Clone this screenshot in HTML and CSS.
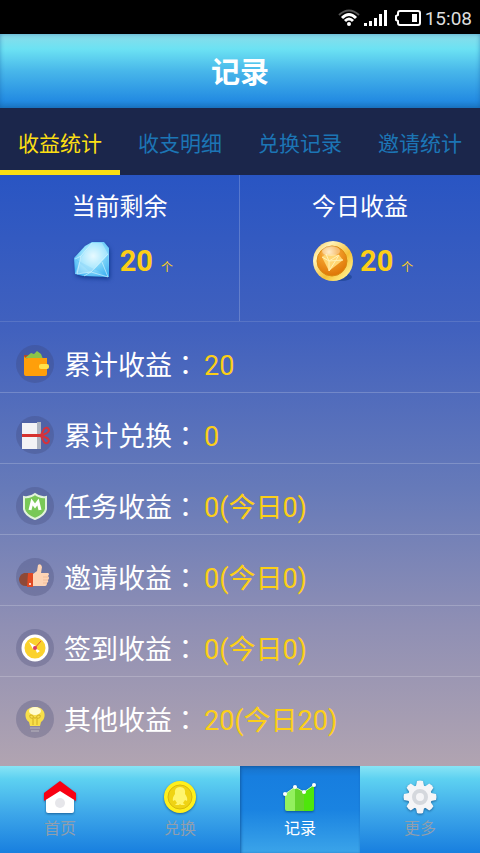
FILE: index.html
```html
<!DOCTYPE html>
<html lang="zh-CN">
	<head>
		<meta charset="utf-8">
		<meta name="viewport" content="width=device-width, initial-scale=1.0">
		<title>记录</title>
		<link rel="stylesheet" href="styles.css">
	</head>
	<body>
		<!-- 状态栏 -->
		<div class="status">
			<svg width="22" height="18" viewBox="0 0 22 18" fill="none" stroke-width="2">
				<path d="M1 6Q11-3 21 6" stroke="#555"/>
				<path d="M4 9Q11 2 18 9M7 12Q11 8 15 12" stroke="#fff" stroke-width="3"/>
				<circle cx="11" cy="15" r="2" fill="#fff"/>
			</svg>
			<svg width="23" height="18" viewBox="0 0 23 18" fill="#fff">
				<path d="M0 14h3v3H0zM5 12h3v5H5zM10 9h3v8h-3zM15 5h3v12h-3zM20 1h3v16h-3z"/>
			</svg>
			<svg class="battery" width="26" height="18" viewBox="0 0 26 18">
				<path d="M5 2h18q2 0 2 2v10q0 2-2 2H5q-2 0-2-2v-2L1 11V7l2-1V4q0-2 2-2z" fill="none" stroke="#fff" stroke-width="2"/>
				<path d="M17 5h5v8h-5z" fill="#fff"/>
			</svg>
			<span>15:08</span>
		</div>

		<header class="header">
			<h1>记录</h1>
		</header>

		<nav class="tabs">
			<a class="active" href="#">收益统计</a>
			<a href="#">收支明细</a>
			<a href="#">兑换记录</a>
			<a href="#">邀请统计</a>
		</nav>

		<main class="main">
			<div class="total">
				<section class="total-item">
					<h2>当前剩余</h2>
					<p>
						<svg class="gem" width="42" height="42" viewBox="0 0 42 42">
							<defs>
								<radialGradient id="gem" cx=".55" cy=".4" r=".65">
									<stop offset="0" stop-color="#f2fdff"/>
									<stop offset=".5" stop-color="#97e2fd"/>
									<stop offset="1" stop-color="#45b4f4"/>
								</radialGradient>
							</defs>
							<path d="M2 18L13 6 20 2 32 2 37 8V37L11 36 3 34z" fill="url(#gem)"/>
							<path d="M3 19L19 33 36 15 37 37z" fill="#38aff0" opacity=".3"/>
							<path d="M20 3L9 18 3 34 19 32 36 14 30 3z" fill="#d8f6ff" opacity=".4"/>
							<path d="M3 19L9 16 20 3M9 16L5 34 19 32 36 14M19 32L36 37 30 22M19 32L12 36" fill="none" stroke="#e0f9ff" opacity=".6"/>
						</svg>
						<strong>20</strong><span>个</span>
					</p>
				</section>
				<section class="total-item">
					<h2>今日收益</h2>
					<p>
						<svg width="42" height="42" viewBox="0 0 42 42">
							<defs>
								<linearGradient id="rim" x2="1" y2="1">
									<stop offset="0" stop-color="#f9bd3d"/>
									<stop offset=".25" stop-color="#fff3b8"/>
									<stop offset=".6" stop-color="#f6c136"/>
									<stop offset=".85" stop-color="#ffeb83"/>
									<stop offset="1" stop-color="#c97c12"/>
								</linearGradient>
								<radialGradient id="face" cx=".4" cy=".2" r=".8">
									<stop offset="0" stop-color="#ffe3ac"/>
									<stop offset=".35" stop-color="#f3a02c"/>
									<stop offset="1" stop-color="#de7606"/>
								</radialGradient>
							</defs>
							<ellipse cx="29" cy="37" rx="11" ry="4" fill="#123a80" opacity=".5"/>
							<circle cx="21" cy="21" r="20" fill="url(#rim)"/>
							<circle cx="20" cy="21" r="15" fill="url(#face)" stroke="#da8a12"/>
							<path d="M10 17L14 14 27 15 31 20 17 31z" fill="#ffd673"/>
							<path d="M10 17L17 21 31 20M14 14L17 21V31L24 20 27 15 17 21" fill="none" stroke="#fff1b5"/>
							<ellipse cx="19" cy="11" rx="9" ry="5" fill="#fff" opacity=".35"/>
						</svg>
						<strong>20</strong><span>个</span>
					</p>
				</section>
			</div>

			<ul class="list">
				<li>
					<svg class="icon" viewBox="0 0 38 38">
						<circle cx="19" cy="19" r="19"/>
						<path d="M8 10h5v4H8z" fill="#b64926"/>
						<path d="M9 13L15 8 18 9 21 6 25 9 27 14z" fill="#8bc34a"/>
						<path d="M8 11q1 3 4 2h19v16q0 2-2 2H10q-2 0-2-2z" fill="#ff9f0a"/>
						<rect x="23" y="19" width="10" height="5" rx="2" fill="#ffe14a"/>
					</svg>
					<span class="name">累计收益<i lang="zh-TW">：</i></span><span class="num">20</span>
				</li>
				<li>
					<svg class="icon" viewBox="0 0 38 38">
						<circle cx="19" cy="19" r="19"/>
						<path d="M6 7h16v26H6z" fill="#f3f3f5"/>
						<path d="M21 6h4v27h-4z" fill="#aeb5c1"/>
						<path d="M6 18h22v3H6z" fill="#d6322f"/>
						<path d="M25 19L28 13Q31 10 33 14 33 17 26 19M26 20Q33 22 33 25 31 29 28 26L25 20" fill="none" stroke="#d6323a" stroke-width="2"/>
					</svg>
					<span class="name">累计兑换<i lang="zh-TW">：</i></span><span class="num">0</span>
				</li>
				<li>
					<svg class="icon" viewBox="0 0 38 38">
						<circle cx="19" cy="19" r="19"/>
						<path d="M19 7Q24 11 30 10V22Q29 28 19 32 9 28 8 22V10Q14 11 19 7z" fill="#79c857" stroke="#e2f3dc" stroke-width="2"/>
						<path d="M14 23L16 15 19 19 22 15 24 23" fill="none" stroke="#fff" stroke-width="3"/>
					</svg>
					<span class="name">任务收益<i lang="zh-TW">：</i></span><span class="num">0(今日0)</span>
				</li>
				<li>
					<svg class="icon" viewBox="0 0 38 38">
						<circle cx="19" cy="19" r="19"/>
						<path d="M14 15H8Q3 17 3 22 4 28 10 28h5z" fill="#8e4937"/>
						<path d="M12 15h5v14h-6z" fill="#e04a24"/>
						<circle cx="14" cy="26" r="1" fill="#fff"/>
						<path d="M17 16L21 13 22 7Q25 5 26 9L25 15H32Q34 16 32 18 34 20 32 22 33 24 31 25 31 28 29 28H17z" fill="#fdd4b5"/>
						<path d="M27 19h5M27 22h5M27 25h4" stroke="#f1bd9a"/>
					</svg>
					<span class="name">邀请收益<i lang="zh-TW">：</i></span><span class="num">0(今日0)</span>
				</li>
				<li>
					<svg class="icon" viewBox="0 0 38 38">
						<circle cx="19" cy="19" r="19"/>
						<circle cx="19" cy="19" r="12" fill="#fbd22d" stroke="#fff" stroke-width="3"/>
						<path d="M13 13L20 17 17 20zM19 19L24 22 21 24z" fill="#fff"/>
						<path d="M18 20L25 12" stroke="#e45432"/>
						<circle cx="19" cy="19" r="2" fill="#d63b66"/>
					</svg>
					<span class="name">签到收益<i lang="zh-TW">：</i></span><span class="num">0(今日0)</span>
				</li>
				<li>
					<svg class="icon" viewBox="0 0 38 38">
						<circle cx="19" cy="19" r="19"/>
						<path d="M19 7C7 7 8 19 13 22L14 26H24L25 22C31 18 30 7 19 7z" fill="#f8df4a"/>
						<ellipse cx="19" cy="11" rx="6" ry="4" fill="#fffbd0"/>
						<path d="M17 25V18Q13 19 14 15 17 14 18 18H20Q21 14 24 15 25 19 21 18V25" fill="none" stroke="#d2ae24"/>
						<path d="M14 28h10M15 31h8" stroke="#b9b5bd"/>
					</svg>
					<span class="name">其他收益<i lang="zh-TW">：</i></span><span class="num">20(今日20)</span>
				</li>
			</ul>
		</main>

		<!-- 底部导航 -->
		<nav class="footer">
			<a href="#">
				<svg width="34" height="34" viewBox="0 0 34 34">
					<path d="M3 15L17 6 31 15V31Q31 33 29 33H5Q3 33 3 31z" fill="#fff"/>
					<path d="M17 1L33 13V21L17 11 1 21V13z" fill="#f80012"/>
					<circle cx="17" cy="23" r="5" fill="#e6e6ea"/>
				</svg>
				首页
			</a>
			<a href="#">
				<svg width="34" height="34" viewBox="0 0 34 34">
					<circle cx="17" cy="17" r="16" fill="#fff01c"/>
					<circle cx="17" cy="17" r="12" fill="#efd314" stroke="#d8b90e"/>
					<path d="M17 7Q11 7 12 14 9 18 10 21L12 20 14 23 12 25H16L17 24 18 25H22L20 23 22 20 24 21Q25 18 22 14 23 7 17 7z" fill="#fff56d"/>
				</svg>
				兑换
			</a>
			<a class="active" href="#">
				<svg width="34" height="34" viewBox="0 0 34 34">
					<path d="M2 14L12 7V31H4Q2 31 2 29z" fill="#93f05e"/>
					<path d="M12 7L21 12V31H12z" fill="#65d52a"/>
					<path d="M21 12L31 5V29Q31 31 29 31H21z" fill="#4ee60b"/>
					<path d="M2 14L12 7 21 12 31 5" fill="none" stroke="#c9f5b4"/>
					<g fill="#fff">
						<circle cx="2" cy="14" r="2"/>
						<circle cx="12" cy="7" r="2"/>
						<circle cx="21" cy="12" r="2"/>
						<circle cx="31" cy="5" r="2"/>
					</g>
				</svg>
				记录
			</a>
			<a href="#">
				<svg width="34" height="34" viewBox="0 0 34 34">
					<g fill="#f5f5f7">
						<circle cx="17" cy="17" r="12"/>
						<path id="tooth" d="M13 6L14 1Q17 0 20 1L21 6V28L20 33Q17 34 14 33L13 28z"/>
						<use href="#tooth" transform="rotate(45 17 17)"/>
						<use href="#tooth" transform="rotate(90 17 17)"/>
						<use href="#tooth" transform="rotate(135 17 17)"/>
					</g>
					<circle cx="17" cy="17" r="6" fill="#f5f5f7" stroke="#d5d8dd" stroke-width="4"/>
				</svg>
				更多
			</a>
		</nav>
	</body>
</html>
```
FILE: styles.css
```css
*{
	box-sizing: border-box;
	margin: 0;
	padding: 0;
}
body{
	display: flex;
	flex-direction: column;
	min-height: 100vh;
	background: #000;
	color: #fff;
	font-family: Roboto, "Noto Sans CJK SC", sans-serif;
}
a{
	text-decoration: none;
}
svg{
	flex: none;
}

/* 状态栏 */
.status{
	display: flex;
	justify-content: flex-end;
	align-items: center;
	gap: 4px;
	height: 34px;
	padding: 2px 8px 0;
	color: #ddd;
	font-size: 19px;
}
.battery{
	margin-left: 4px;
}

.header{
	display: flex;
	justify-content: center;
	align-items: center;
	height: 74px;
	padding-top: 3px;
	background: linear-gradient(#8bdce9, #6ce2f3 20%, #48b7ea 50%, #238be2 90%, #1b78c5);
	box-shadow: inset 0 0 4px rgba(20, 90, 160, .5);
}
.header h1{
	font-size: 29px;
	line-height: 40px;
}

/* 选项卡 */
.tabs{
	display: flex;
	height: 67px;
	background: #1b264b;
}
.tabs a{
	flex: 1;
	padding-top: 6px;
	border-bottom: 5px solid transparent;
	color: #1c75b5;
	font-size: 21px;
	line-height: 60px;
	text-align: center;
}
.tabs .active{
	border-color: #fbdf13;
	color: #fbdf13;
}

.main{
	flex: 1;
	background: linear-gradient(#2955c3, #4161be 26%, #667ab9 53%, #8f8fb4 76%, #b1a4b1);
}
.total{
	display: flex;
	border-bottom: 1px solid rgba(255, 255, 255, .12);
}
.total-item{
	width: 50%;
	height: 146px;
	padding-top: 14px;
}
.total-item:first-child{
	border-right: 1px solid rgba(255, 255, 255, .2);
}
.total-item h2{
	font-size: 24px;
	font-weight: 400;
	line-height: 36px;
	text-align: center;
}
.total-item p{
	display: flex;
	align-items: center;
	margin-top: 15px;
	padding-left: 30%;
	color: #fccf17;
}
.total-item strong{
	margin: 0 8px 0 6px;
	font-size: 29px;
}
.total-item span{
	padding-top: 10px;
	font-size: 12px;
}
.gem{
	filter: drop-shadow(1px 2px 2px #12398f);
}

/* 收益列表 */
.list{
	list-style: none;
}
.list li{
	display: flex;
	align-items: center;
	height: 71px;
	padding: 14px 16px 0;
	border-bottom: 1px solid rgba(255, 255, 255, .2);
	font-size: 27px;
	line-height: 36px;
}
.list li:last-child{
	border-color: transparent;
}
.icon{
	width: 38px;
	height: 38px;
	margin-right: 10px;
}
.icon > circle:first-child{
	fill: rgba(55, 60, 105, .25);
}
.name,
.num{
	padding-top: 4px;
}
/* 冒号居中 */
.name i{
	font-family: "Noto Sans CJK TC", sans-serif;
	font-style: normal;
	line-height: 1;
}
.num{
	margin-left: 5px;
	color: #fccf17;
}

.footer{
	display: flex;
	height: 87px;
	background: #1784e0;
}
.footer a{
	display: flex;
	flex: 1;
	flex-direction: column;
	align-items: center;
	gap: 3px;
	padding-top: 14px;
	background: linear-gradient(#88e4f5, #5dd1f1 15%, #3da6e9 55%, #187fdf);
	color: #8f9eae;
	font-size: 16px;
	line-height: 24px;
}
.footer svg{
	filter: drop-shadow(0 1px 1px rgba(0, 50, 100, .6));
}
.footer .active{
	background: linear-gradient(#1872c9, #177edf 12%, #1a83e1 50%, #3ba4e9);
	box-shadow: inset 1px 1px 3px #125ba5;
	color: #fff;
}
```
